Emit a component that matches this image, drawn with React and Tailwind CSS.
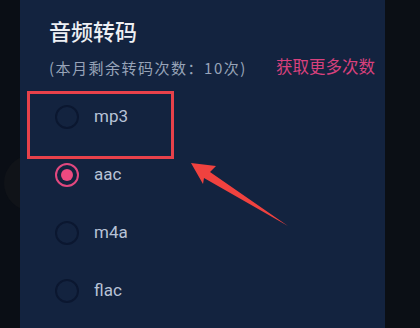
// App.jsx - audio transcode dialog

const formats = [
  { id: 'mp3', label: 'mp3' },
  { id: 'aac', label: 'aac' },
  { id: 'm4a', label: 'm4a' },
  { id: 'flac', label: 'flac' },
];

const Radio = ({ checked }) => (
  checked ? (
    <span className="w-[24px] h-[24px] rounded-full border-2 border-[#e2487f] flex items-center justify-center">
      <span className="w-[12px] h-[12px] rounded-full bg-[#ec4a80]" />
    </span>
  ) : (
    <span className="w-[24px] h-[24px] rounded-full border-2 border-[#0b1730]" />
  )
);

const App = () => {
  const selected = 'aac';

  return (
    <div
      className="relative w-[420px] h-[328px] overflow-hidden bg-[#0a0e15] flex"
      style={{ fontFamily: 'Roboto, "Noto Sans CJK SC", sans-serif' }}
    >
      {/* Background app behind the dialog */}
      <div className="w-[20px] h-full overflow-hidden">
        <div className="mt-[155px] ml-[4px] w-[60px] h-[56px] rounded-full bg-[#101318]" />
      </div>

      {/* Dialog */}
      <div className="w-[365px] h-full bg-[#13233f] flex flex-col pl-[29px] pr-[10px] pt-[18px]">
        <h1 className="text-[22px] leading-[30px] font-medium text-[#eef0f4]">音频转码</h1>

        <div className="mt-[9px] flex items-center justify-between leading-[22px]">
          <span
            className="text-[15px] tracking-[1.5px] text-[#97a3b8]"
            style={{ fontFamily: '"Noto Sans CJK SC", sans-serif' }}
          >
            (本月剩余转码次数：10次)
          </span>
          <span className="text-[16.5px] text-[#d8417d]">获取更多次数</span>
        </div>

        <div className="mt-[9px] flex flex-col pl-[6px]">
          {formats.map((item) => (
            <div key={item.id} className="h-[58px] flex items-center gap-[15px]">
              <Radio checked={item.id === selected} />
              <span className="text-[17px] text-[#b7c2d6]">{item.label}</span>
            </div>
          ))}
        </div>
      </div>

      <div className="flex-1 h-full bg-[#0b0f15]" />

      {/* Annotation: highlight box */}
      <div className="absolute left-[27px] top-[91px] w-[147px] h-[68px] border-[3px] border-[#e8414a]" />

      {/* Annotation: arrow */}
      <svg className="absolute inset-0 pointer-events-none" width="420" height="328" viewBox="0 0 420 328">
        <polygon
          points="191,163 216,166 210,172 288,226 204,178 203,184"
          fill="#f0423f"
        />
      </svg>
    </div>
  );
};

export default App;
